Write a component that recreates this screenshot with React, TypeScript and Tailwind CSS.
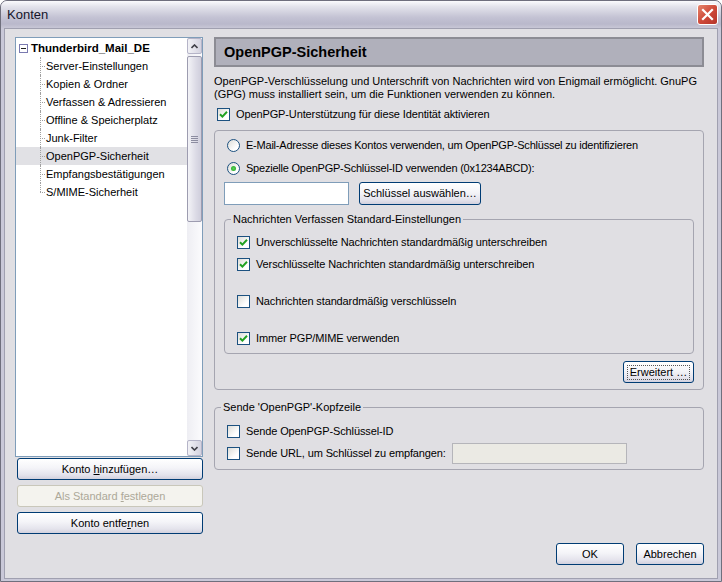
import type { ReactNode } from "react";

const FONT = "font-['Liberation_Sans',Arial,sans-serif]";

function XpButton({
	children,
	className = "",
	disabled = false,
	focused = false,
}: {
	children: ReactNode;
	className?: string;
	disabled?: boolean;
	focused?: boolean;
}) {
	return (
		<button
			type="button"
			disabled={disabled}
			className={[
				"flex h-[22px] items-center justify-center rounded-[3px] border text-[11px] leading-none",
				disabled
					? "border-[#c9c7ba] bg-[#f4f3ee] text-[#aca899]"
					: "border-[#003c74] bg-[linear-gradient(to_bottom,#ffffff_0%,#f4f4f8_45%,#e4e3ec_80%,#d2d1de_100%)] text-black",
				className,
			].join(" ")}
		>
			{focused ? (
				<span className="flex h-[15px] w-[calc(100%-6px)] items-center justify-center border border-dotted border-[#555]">
					{children}
				</span>
			) : (
				children
			)}
		</button>
	);
}

function Checkbox({ checked }: { checked: boolean }) {
	return (
		<span className="flex h-[13px] w-[13px] shrink-0 items-center justify-center border border-[#1c5180] bg-[linear-gradient(135deg,#dcdcd7_0%,#ffffff_70%)]">
			{checked ? (
				<svg width="9" height="9" viewBox="0 0 9 9">
					<path
						d="M1 4.2 L3.4 6.6 L8 1.8"
						fill="none"
						stroke="#21a121"
						strokeWidth="2"
					/>
				</svg>
			) : null}
		</span>
	);
}

function Radio({ checked }: { checked: boolean }) {
	return (
		<span className="flex h-[13px] w-[13px] shrink-0 items-center justify-center rounded-full border border-[#1c5180] bg-[linear-gradient(135deg,#dcdcd7_0%,#ffffff_70%)]">
			{checked ? (
				<span className="h-[5px] w-[5px] rounded-full bg-[radial-gradient(circle,#5ad35a_0%,#21a121_100%)]" />
			) : null}
		</span>
	);
}

function CheckRow({
	checked,
	label,
	className = "",
}: {
	checked: boolean;
	label: string;
	className?: string;
}) {
	return (
		<div className={`flex h-[13px] items-center gap-[6px] ${className}`}>
			<Checkbox checked={checked} />
			<span className="whitespace-nowrap tracking-[-0.12px]">{label}</span>
		</div>
	);
}

const treeItems = [
	"Server-Einstellungen",
	"Kopien & Ordner",
	"Verfassen & Adressieren",
	"Offline & Speicherplatz",
	"Junk-Filter",
	"OpenPGP-Sicherheit",
	"Empfangsbestätigungen",
	"S/MIME-Sicherheit",
];

function ScrollArrow({ down }: { down?: boolean }) {
	return (
		<div className="flex h-[16px] w-[15px] items-center justify-center rounded-[2px] border border-[#b5b4c8] bg-[linear-gradient(to_right,#f2f2f6,#d4d3e0)]">
			<svg width="7" height="5" viewBox="0 0 7 5">
				<path
					d={down ? "M0.5 1 L3.5 4 L6.5 1" : "M0.5 4 L3.5 1 L6.5 4"}
					fill="none"
					stroke="#404048"
					strokeWidth="1.6"
				/>
			</svg>
		</div>
	);
}

function AccountTree() {
	return (
		<div className="flex h-[420px] w-[188px] border border-[#7f9db9] bg-white">
			<div className="flex flex-1 flex-col pt-[1px]">
				<div className="flex h-[18px] items-center pl-[3px]">
					<span className="flex h-[9px] w-[9px] items-center justify-center border border-[#7a7ab0] bg-white">
						<span className="h-px w-[5px] bg-[#202020]" />
					</span>
					<span className="ml-[3px] text-[11.5px] font-bold">
						Thunderbird_Mail_DE
					</span>
				</div>
				{treeItems.map((item, i) => (
					<div
						key={item}
						className={[
							"flex h-[18px] items-center",
							item === "OpenPGP-Sicherheit" ? "bg-[#e1e1e5]" : "",
						].join(" ")}
					>
						<span className="relative ml-[24px] h-full w-[5px]">
							<span
								className={[
									"absolute left-0 top-0 border-l border-dotted border-[#a0a0a0]",
									i === treeItems.length - 1 ? "h-[9px]" : "h-full",
								].join(" ")}
							/>
							<span className="absolute left-0 top-[9px] w-[5px] border-t border-dotted border-[#a0a0a0]" />
						</span>
						<span className="ml-[1px]">{item}</span>
					</div>
				))}
			</div>
			<div className="flex w-[15px] flex-col bg-[linear-gradient(to_right,#eeeef3,#fbfbfd)]">
				<ScrollArrow />
				<div className="mt-[2px] flex h-[166px] items-center justify-center rounded-[2px] border border-[#9d9cb0] bg-[linear-gradient(to_right,#f3f3f7,#dcdbe6_60%,#cfcedc)]">
					<div className="flex flex-col gap-[1px]">
						<span className="h-px w-[7px] bg-[#8c8ca0]" />
						<span className="h-px w-[7px] bg-[#8c8ca0]" />
						<span className="h-px w-[7px] bg-[#8c8ca0]" />
						<span className="h-px w-[7px] bg-[#8c8ca0]" />
					</div>
				</div>
				<div className="flex-1" />
				<ScrollArrow down />
			</div>
		</div>
	);
}

export default function App() {
	return (
		<div
			className={`${FONT} flex h-[582px] w-[722px] flex-col overflow-hidden rounded-t-[7px] border border-[#6f6f7d] bg-[#c9c8d8] text-[11px] leading-[13px] text-black`}
		>
			<div className="flex h-[27px] shrink-0 items-center justify-between bg-[linear-gradient(to_bottom,#fbfbfd_0%,#e4e4ec_20%,#c4c3d4_60%,#b9b8cb_85%,#c8c7d6_100%)] pl-[6px] pr-[3px]">
				<span className="text-[13px] leading-none text-[#15152a]">Konten</span>
				<div className="flex h-[21px] w-[21px] items-center justify-center rounded-[3px] border border-white bg-[linear-gradient(135deg,#e5866d_0%,#cf4a3a_50%,#b5342a_100%)]">
					<svg width="13" height="13" viewBox="0 0 13 13">
						<path
							d="M2 2 L11 11 M11 2 L2 11"
							stroke="white"
							strokeWidth="2.2"
							strokeLinecap="square"
						/>
					</svg>
				</div>
			</div>
			<div className="flex flex-1 px-[3px] pb-[2px]">
				<div className="flex flex-1 border border-[#a0a0b0] bg-[#e0dfe3] pl-[10px] pr-[13px] pt-[8px] pb-[13px]">
					<div className="flex w-[188px] flex-col">
						<AccountTree />
						<XpButton className="ml-[2px] mt-[1px] w-[186px]">
							<span>
								Konto <u>h</u>inzufügen…
							</span>
						</XpButton>
						<XpButton disabled className="ml-[2px] mt-[5px] w-[186px]">
							<span>
								Als Standard <u>f</u>estlegen
							</span>
						</XpButton>
						<XpButton className="ml-[2px] mt-[5px] w-[186px]">
							<span>
								Konto entfe<u>r</u>nen
							</span>
						</XpButton>
					</div>

					<div className="ml-[11px] flex flex-1 flex-col">
						<div className="flex h-[30px] items-center border-2 border-[#8c8c94] bg-[#b0b0bb] pl-[8px] text-[14.5px] font-bold">
							OpenPGP-Sicherheit
						</div>
						<p className="mt-[8px] leading-[13px]">
							OpenPGP-Verschlüsselung und Unterschrift von Nachrichten wird von
							Enigmail ermöglicht. GnuPG (GPG) muss installiert sein, um die
							Funktionen verwenden zu können.
						</p>
						<CheckRow
							checked
							label="OpenPGP-Unterstützung für diese Identität aktivieren"
							className="ml-[3px] mt-[7px]"
						/>

						<div className="mt-[9px] flex h-[260px] flex-col rounded-[4px] border border-[#a5a5b0] px-[9px] pt-[8px]">
							<div className="flex h-[13px] items-center gap-[6px] pl-[3px]">
								<Radio checked={false} />
								<span className="tracking-[-0.22px]">
									E-Mail-Adresse dieses Kontos verwenden, um
									OpenPGP-Schlüssel zu identifizieren
								</span>
							</div>
							<div className="mt-[10px] flex h-[13px] items-center gap-[6px] pl-[3px]">
								<Radio checked />
								<span className="tracking-[-0.22px]">
									Spezielle OpenPGP-Schlüssel-ID verwenden (0x1234ABCD):
								</span>
							</div>
							<div className="mt-[7px] flex items-center">
								<div className="h-[23px] w-[125px] border border-[#7f9db9] bg-white" />
								<XpButton className="ml-[10px] h-[23px] w-[122px]">
									Schlüssel auswählen…
								</XpButton>
							</div>

							<div className="relative mt-[14px] h-[135px] rounded-[4px] border border-[#a5a5b0] pl-[12px] pt-[16px]">
								<span className="absolute -top-[7px] left-[6px] bg-[#e0dfe3] px-[2px]">
									Nachrichten Verfassen Standard-Einstellungen
								</span>
								<CheckRow
									checked
									label="Unverschlüsselte Nachrichten standardmäßig unterschreiben"
								/>
								<CheckRow
									checked
									label="Verschlüsselte Nachrichten standardmäßig unterschreiben"
									className="mt-[9px]"
								/>
								<CheckRow
									checked={false}
									label="Nachrichten standardmäßig verschlüsseln"
									className="mt-[24px]"
								/>
								<CheckRow
									checked
									label="Immer PGP/MIME verwenden"
									className="mt-[24px]"
								/>
							</div>
							<div className="mt-[7px] flex justify-end">
								<XpButton focused className="h-[21px] w-[71px]">
									Erweitert …
								</XpButton>
							</div>
						</div>

						<div className="relative mt-[17px] h-[63px] rounded-[4px] border border-[#a5a5b0] pl-[12px] pt-[17px]">
							<span className="absolute -top-[7px] left-[6px] bg-[#e0dfe3] px-[2px]">
								Sende &apos;OpenPGP&apos;-Kopfzeile
							</span>
							<CheckRow checked={false} label="Sende OpenPGP-Schlüssel-ID" />
							<div className="mt-[9px] flex h-[13px] items-center">
								<div className="w-[225px] shrink-0">
									<CheckRow
										checked={false}
										label="Sende URL, um Schlüssel zu empfangen:"
									/>
								</div>
								<div className="h-[21px] w-[175px] border border-[#b5b5ba] bg-[#ebeae4]" />
							</div>
						</div>

						<div className="flex-1" />
						<div className="flex justify-end gap-[12px]">
							<XpButton className="w-[68px]">OK</XpButton>
							<XpButton className="w-[68px]">Abbrechen</XpButton>
						</div>
					</div>
				</div>
			</div>
		</div>
	);
}
